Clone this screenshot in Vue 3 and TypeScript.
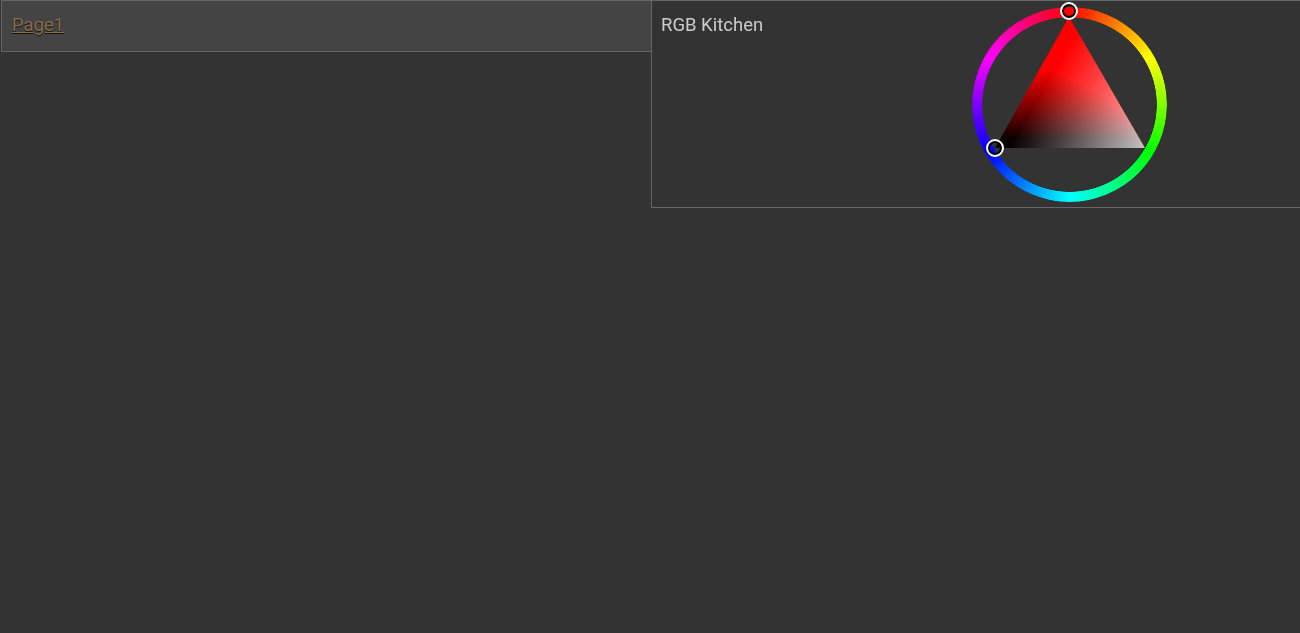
<script setup lang="ts">
const page = 'Page1'
const title = 'RGB Kitchen'
</script>

<template>
  <div class="board">
    <div class="tile nav">
      <a class="link" href="#">{{ page }}</a>
    </div>
    <div class="tile kitchen">
      <div class="name">{{ title }}</div>
      <div class="wheel">
        <div class="ring"></div>
        <svg class="triangle" width="195" height="195" viewBox="0 0 195 195">
          <defs>
            <linearGradient id="hue" gradientUnits="userSpaceOnUse" x1="97" y1="10" x2="97" y2="141">
              <stop offset="0.4" stop-color="#f00" />
              <stop offset="0.75" stop-color="#600000" />
              <stop offset="0.92" stop-color="#100000" />
              <stop offset="1" stop-color="#000" />
            </linearGradient>
            <linearGradient id="light" gradientUnits="userSpaceOnUse" x1="173" y1="141" x2="60" y2="75.5">
              <stop offset="0" stop-color="#c4c4c4" />
              <stop offset="0.6" stop-color="#3c3c3c" />
              <stop offset="0.9" stop-color="#000" />
            </linearGradient>
          </defs>
          <polygon points="97,10 23,141 173,141" fill="url(#hue)" />
          <polygon class="add" points="97,10 23,141 173,141" fill="url(#light)" />
        </svg>
        <span class="handle hue-handle"></span>
        <span class="handle tone-handle"></span>
      </div>
    </div>
  </div>
</template>

<style>
html, body {
  margin: 0;
  background: #333333;
}
</style>

<style scoped>
.board {
  display: flex;
  align-items: flex-start;
  min-height: 633px;
  padding-left: 1px;
  box-sizing: border-box;
  background: #333333;
  font-family: Roboto, "Liberation Sans", sans-serif;
  font-size: 18.5px;
}
.tile {
  box-sizing: border-box;
  border: 1px solid #666666;
}
.nav {
  width: 650px;
  height: 52px;
  padding: 0 10px 3px;
  display: flex;
  align-items: center;
  background: #444444;
  border-right: 0;
}
.link {
  color: #8a6c48;
  text-decoration: underline;
  text-shadow: 0 1px 1px #111111;
}
.kitchen {
  width: 649px;
  height: 208px;
  display: flex;
  align-items: flex-start;
  border-right: 0;
  color: #cccccc;
}
.name {
  width: 320px;
  box-sizing: border-box;
  padding: 14px 0 0 9px;
  line-height: 20px;
}
.wheel {
  position: relative;
  width: 195px;
  height: 195px;
  margin-top: 6px;
}
.ring {
  width: 100%;
  height: 100%;
  border-radius: 50%;
  background: conic-gradient(#f00, #ff0, #0f0, #0ff, #00f, #f0f, #f00);
  -webkit-mask: radial-gradient(circle, transparent 87px, #000 87.6px);
  mask: radial-gradient(circle, transparent 87px, #000 87.6px);
}
.triangle {
  position: absolute;
  inset: 0;
}
.add {
  mix-blend-mode: plus-lighter;
}
.handle {
  position: absolute;
  box-sizing: border-box;
  width: 18px;
  height: 18px;
  border: 2px solid #ffffff;
  border-radius: 50%;
  box-shadow: inset 0 0 0 2px #000000;
}
.hue-handle {
  left: 88px;
  top: -5px;
}
.tone-handle {
  left: 14px;
  top: 132px;
}
</style>
